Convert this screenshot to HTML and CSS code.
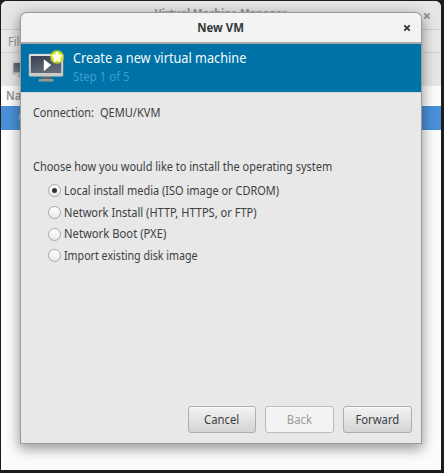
FILE: index.html
```
<!DOCTYPE html>
<html lang="en">
<head>
<meta charset="utf-8">
<title>New VM</title>
<link rel="stylesheet" href="styles.css">
</head>
<body>
<svg class="defs" width="0" height="0" aria-hidden="true">
  <defs>
    <linearGradient id="screen" x1="0" y1="0" x2="0.3" y2="1"><stop offset="0" stop-color="#364052"/><stop offset="1" stop-color="#626977"/></linearGradient>
    <linearGradient id="frame" x1="0" y1="0" x2="0" y2="1"><stop offset="0" stop-color="#e4e6e6"/><stop offset="1" stop-color="#c8c9c7"/></linearGradient>
    <radialGradient id="glow"><stop offset="0.45" stop-color="#f3f53a"/><stop offset="0.75" stop-color="#d6e61a" stop-opacity="0.85"/><stop offset="1" stop-color="#9dcc30" stop-opacity="0"/></radialGradient>
    <symbol id="monitor" viewBox="0 0 36 34">
      <path d="M14 27h9v4h-9z" fill="#5d6568"/>
      <rect x="10.5" y="30" width="15" height="2.4" rx="1" fill="#999791"/>
      <rect x="0.9" y="4.9" width="34.2" height="22.7" rx="1" fill="url(#frame)" stroke="#8f9496" stroke-width="0.4"/>
      <rect x="2.8" y="7" width="30.4" height="17" fill="url(#screen)"/>
      <path d="M15.8 10.3l7.4 5.8L15.8 22.3z" fill="#fff"/>
      <circle cx="29" cy="8" r="7.8" fill="url(#glow)"/>
      <path d="M29 3l1.5 3.2 3.5.4-2.6 2.4.7 3.5-3.1-1.7-3.1 1.7.7-3.5L24 6.6l3.5-.4z" fill="#fffef0" stroke="#fffef0" stroke-width="1" stroke-linejoin="round"/>
    </symbol>
    <symbol id="cross" viewBox="0 0 8 8"><path d="M1.3 1.3l5.4 5.4M6.7 1.3L1.3 6.7" stroke="currentColor" stroke-width="1.9"/></symbol>
  </defs>
</svg>
<main class="manager">
  <header class="manager-title"><span class="t-manager">Virtual Machine Manager</span><svg class="close"><use href="#cross"/></svg></header>
  <nav class="menu"><span>File</span></nav>
  <div class="toolbar"><svg class="tool-icon"><use href="#monitor"/></svg></div>
  <div class="list-head"><span>Name</span></div>
  <div class="list-row"><span>Q</span></div>
</main>
<section class="dialog">
  <header class="dialog-title"><span class="t-dialog">New VM</span><svg class="close"><use href="#cross"/></svg></header>
  <div class="banner">
    <svg class="banner-icon"><use href="#monitor"/></svg>
    <div class="banner-text"><h1><span>Create a new virtual machine</span></h1><p><span class="step">Step 1 of 5</span></p></div>
  </div>
  <div class="content">
    <p class="connection"><span class="label">Connection:</span><span class="value">QEMU/KVM</span></p>
    <p class="question"><span>Choose how you would like to install the operating system</span></p>
    <div class="options">
      <label class="option"><i class="radio checked"></i><span>Local install media (ISO image or CDROM)</span></label>
      <label class="option"><i class="radio"></i><span class="o2">Network Install (HTTP, HTTPS, or FTP)</span></label>
      <label class="option"><i class="radio"></i><span class="o3">Network Boot (PXE)</span></label>
      <label class="option"><i class="radio"></i><span class="o4">Import existing disk image</span></label>
    </div>
  </div>
  <footer class="actions"><button><span>Cancel</span></button><button disabled><span>Back</span></button><button><span>Forward</span></button></footer>
</section>
</body>
</html>
```
FILE: styles.css
```
* { box-sizing: border-box; margin: 0; padding: 0; }
body {
  width: 444px; height: 473px; overflow: hidden; position: relative;
  background: #1c1c1e; color: #3c4142;
  font: 12px/16px "Noto Sans", "Open Sans", sans-serif;
}
span { display: inline-block; transform: scaleX(.914); transform-origin: left; }
.defs { position: absolute; }
.manager {
  width: 440px; height: 469px; margin: 1px 0 0 1px;
  display: flex; flex-direction: column; overflow: hidden;
  background: #fcfcfc; border-radius: 6px 6px 0 0; color: #929494;
}
.manager-title {
  height: 29px; flex: none; display: flex; align-items: center; justify-content: center; padding-bottom: 3px;
  position: relative; background: #e6e6e6; border-bottom: 1px solid #cdcdcd; font-weight: 700; font-size: 12px;
}
.t-manager { transform: scaleX(.87); transform-origin: center; }
.close { position: absolute; width: 8px; height: 8px; right: 10px; top: 11px; }
.menu { height: 23px; flex: none; padding: 4px 7px; background: #e8e8e8; border-bottom: 1px solid #d3d3d3; }
.toolbar { height: 33px; flex: none; padding: 6px 11px; background: #e6e6e6; }
.tool-icon { display: block; width: 20px; height: 19px; opacity: .8; }
.list-head { height: 20px; flex: none; padding: 2px 5px; font-weight: 600; }
.list-row { height: 24px; flex: none; padding: 4px 17px; background: #4a90d9; color: #a8caee; }
.dialog {
  position: absolute; left: 21px; top: 13px; width: 400px; height: 430px;
  display: flex; flex-direction: column; background: #e8e8e8;
  border-radius: 6px 6px 0 0;
  box-shadow: 0 0 0 1px #999b9b, 0 4px 13px 2px rgba(0,0,0,.4);
}
.dialog-title {
  height: 31px; flex: none; position: relative; display: flex; align-items: center; justify-content: center;
  background: #f3f3f3; border-bottom: 2px solid #a7aaa9; border-radius: 6px 6px 0 0;
  font-weight: 700; font-size: 12px; color: #343839;
}
.t-dialog { transform: scaleX(.95); transform-origin: center; }
.banner { height: 48px; flex: none; display: flex; padding: 5px 7px; background: #0072a8; }
.banner-icon { width: 36px; height: 34px; flex: none; }
.banner-text { padding-left: 9.4px; white-space: nowrap; }
.banner h1 { font-size: 14px; line-height: 17px; font-weight: 400; color: #f5fafc; }
.banner h1 span { transform: scaleX(.908); }
.banner p { line-height: 21px; color: #3d9dd2; }
.banner .step { transform: scaleX(.95); }
.content { flex: 1; padding: 12px 12px 12px 12.3px; white-space: nowrap; border-top: 1px solid #d5d7d8; }
.connection { display: flex; }
.connection .label { width: 66.3px; transform: scaleX(.9); }
.connection .value { transform: scaleX(.92); }
.question { margin-top: 38px; }
.options { display: flex; flex-direction: column; margin: 5px 0 0 14.7px; }
.option { height: 21.7px; display: flex; align-items: center; gap: 3.4px; }
.o2 { transform: scaleX(.922); }
.o3 { transform: scaleX(.938); }
.o4 { transform: scaleX(.888); }
.radio {
  width: 13px; height: 13px; flex: none; border-radius: 50%; border: 1px solid #a5a7a5;
  background: linear-gradient(#fff, #e9e9e9); display: grid; place-items: center;
}
.radio.checked::after { content: ""; width: 5px; height: 5px; border-radius: 50%; background: #2f3536; }
.actions { height: 47px; flex: none; display: flex; justify-content: flex-end; padding: 10px 9px 0; gap: 9px; }
button {
  width: 69px; height: 27px; border: 1px solid #adafad; border-radius: 3px;
  background: linear-gradient(#f3f3f3, #d4d4d4); box-shadow: inset 0 1px #fafafa;
  font: inherit; color: #3c4142;
}
button:first-child { width: 68px; }
button span { transform: scaleX(.94); transform-origin: center; }
button:disabled { background: #f3f3f3; color: #999c9c; border-color: #bcbebc; }
```
